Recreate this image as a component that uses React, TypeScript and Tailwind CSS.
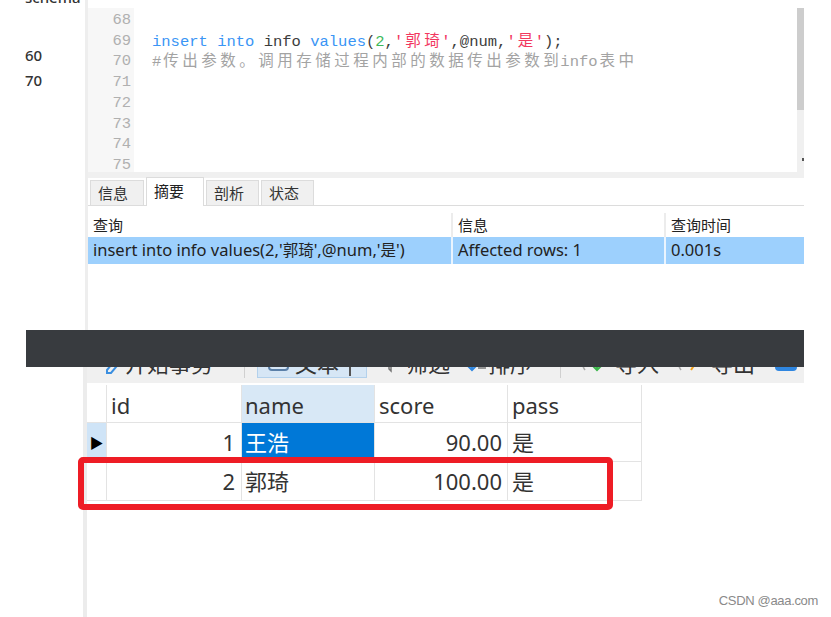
import React from "react";

const mono = { fontFamily: '"Liberation Mono", "Noto Sans CJK SC", monospace' };

// CJK runs in the editor are drawn wider than the mono cell
function Cjk({ children }: { children: React.ReactNode }) {
  return <span className="tracking-[3.5px] ml-[2px] -mr-[2px]">{children}</span>;
}

const lineNumbers = [68, 69, 70, 71, 72, 73, 74, 75];

function Editor() {
  return (
    <div className="flex h-[170px]">
      <div className="flex-1 flex flex-col">
        <div className="flex h-[164px] bg-white">
          <div
            className="w-[46px] bg-[#f7f7f7] pt-[2px] pr-[3px] text-right text-[15.5px] leading-[20.7px] text-[#b0b0b0]"
            style={mono}
          >
            {lineNumbers.map(n => (
              <div key={n}>{n}</div>
            ))}
          </div>
          <div className="flex-1 pl-[18px] pt-[3px] text-[15.5px] leading-[20.7px] whitespace-pre" style={mono}>
            <div>&nbsp;</div>
            <div className="text-[#3c3c3c]">
              <span className="text-[#3a95f5]">insert</span> <span className="text-[#3a95f5]">into</span> info{" "}
              <span className="text-[#3a95f5]">values</span>(<span className="text-[#3cb95a]">2</span>,
              <span className="text-[#f2385f]">'<Cjk>郭琦</Cjk>'</span>,@num,
              <span className="text-[#f2385f]">'<Cjk>是</Cjk>'</span>);
            </div>
            <div className="text-[#a3a3a3]">
              #<Cjk>传出参数。调用存储过程内部的数据传出参数到</Cjk>info<Cjk>表中</Cjk>
            </div>
          </div>
        </div>
        <div className="h-[6px] bg-[#f0f0f0]" />
      </div>
      {/* scrollbar */}
      <div className="w-[7px] flex flex-col">
        <div className="h-[102px] bg-[#cdcdcd]" />
        <div className="flex-1 bg-[#f0f0f0] flex flex-col items-end pt-[48px]">
          <div className="w-[2px] h-[3px] bg-[#555]" />
        </div>
      </div>
    </div>
  );
}

function Tabs() {
  const tabs = [
    { label: "信息", w: "w-[54px]", active: false },
    { label: "摘要", w: "w-[58px]", active: true },
    { label: "剖析", w: "w-[53px]", active: false },
    { label: "状态", w: "w-[53px]", active: false },
  ];
  return (
    <div className="flex items-end h-[28px] border-b border-[#dcdcdc] pl-[2px] gap-[2px]">
      {tabs.map(t =>
        t.active ? (
          <div
            key={t.label}
            className={`${t.w} h-[29px] -mb-px bg-white border-x border-t border-[#dcdcdc] pl-[7px] pt-[2px] text-[15px] text-[#222]`}
          >
            {t.label}
          </div>
        ) : (
          <div
            key={t.label}
            className={`${t.w} h-[25px] bg-[#f0f0f0] border-x border-t border-[#dcdcdc] pl-[7px] pt-[1px] text-[15px] text-[#333]`}
          >
            {t.label}
          </div>
        )
      )}
    </div>
  );
}

function Summary() {
  return (
    <div className="pt-[7px] text-[#222]">
      <div className="flex h-[24px] items-center text-[15px]">
        <div className="w-[365px] pl-[5px] h-full flex items-center border-r-2 border-[#ececec]">查询</div>
        <div className="w-[213px] pl-[5px] h-full flex items-center border-r-2 border-[#ececec]">信息</div>
        <div className="flex-1 pl-[5px] h-full flex items-center">查询时间</div>
      </div>
      <div className="flex h-[27px] items-center bg-[#9dd0fd] text-[16.5px]">
        <div className="w-[365px] pl-[5px] h-full flex items-center border-r-2 border-[#eaf4fe] whitespace-nowrap">
          insert into info values(2,'<span className="text-[15.5px]">郭琦</span>',@num,'<span className="text-[15.5px]">是</span>')
        </div>
        <div className="w-[213px] pl-[5px] h-full flex items-center border-r-2 border-[#eaf4fe]">Affected rows: 1</div>
        <div className="flex-1 pl-[5px] h-full flex items-center">0.001s</div>
      </div>
    </div>
  );
}

function Toolbar() {
  return (
    <div className="h-[16px] bg-[#f0f0f0] overflow-hidden">
      <div className="flex items-center h-[30px] -mt-[19px] text-[22px] text-[#333] whitespace-nowrap">
        <div className="flex items-center ml-[6px] w-[151px]">
          <svg width="30" height="22" viewBox="0 0 30 22" fill="none" className="mr-[2px]">
            <path d="M2 12h16" stroke="#9aa0a6" strokeWidth="2" />
            <path d="M14 18l10-12 4 3-10 12h-4z" stroke="#3b8fe0" strokeWidth="2" />
          </svg>
          开始事务
        </div>
        <div className="w-px h-[30px] bg-[#d0d0d0]" />
        <div className="ml-[12px] w-[110px] h-[30px] bg-[#d6e6f5] border border-[#b3d1ec] flex items-center pl-[9px]">
          <svg width="24" height="22" viewBox="0 0 24 22" fill="none" className="mr-[4px]">
            <rect x="2" y="3" width="19" height="15" rx="3" stroke="#5a7fa8" strokeWidth="2" />
          </svg>
          文本
          <div className="ml-[10px] w-[2px] h-[26px] bg-[#555]" />
        </div>
        <div className="flex items-center ml-[16px]">
          <svg width="14" height="22" viewBox="0 0 14 22" fill="none" className="mr-[9px]">
            <path d="M1 4h12l-5 7v8l-2-2v-6z" stroke="#777" strokeWidth="1.5" />
          </svg>
          筛选
        </div>
        <div className="flex items-center ml-[16px]">
          <svg width="22" height="22" viewBox="0 0 22 22" fill="none">
            <path d="M6 2v16M2 14l4 4 4-4" stroke="#2f86e0" strokeWidth="2" />
            <path d="M12 12h8M12 16h8" stroke="#777" strokeWidth="1.5" />
          </svg>
          排序
        </div>
        <div className="ml-[28px] w-px h-[30px] bg-[#d0d0d0]" />
        <div className="flex items-center ml-[20px]">
          <svg width="30" height="22" viewBox="0 0 30 22" fill="none" className="mr-[4px]">
            <path d="M4 6c-3 4-3 8 0 12" stroke="#aaa" strokeWidth="1.5" />
            <path d="M16 4v14M11 13l5 5 5-5" stroke="#3bb54a" strokeWidth="2" />
          </svg>
          导入
        </div>
        <div className="flex items-center ml-[18px]">
          <svg width="30" height="22" viewBox="0 0 30 22" fill="none" className="mr-[4px]">
            <path d="M4 6c-3 4-3 8 0 12" stroke="#aaa" strokeWidth="1.5" />
            <path d="M14 18l8-12" stroke="#f2a11c" strokeWidth="2" />
          </svg>
          导出
        </div>
        <div className="ml-[18px]">
          <svg width="26" height="22" viewBox="0 0 26 22" fill="none">
            <rect x="2" y="4" width="22" height="15" rx="4" fill="#2f86e0" />
            <path d="M7 10h12M7 14h12" stroke="#fff" strokeWidth="1.5" />
          </svg>
        </div>
      </div>
    </div>
  );
}

const rows = [
  { id: "1", name: "王浩", score: "90.00", pass: "是", current: true },
  { id: "2", name: "郭琦", score: "100.00", pass: "是", current: false },
];

function Grid() {
  const cell = "border-r border-b border-[#e3e3e3] flex items-center";
  return (
    <div className="mt-[2px] text-[22px] text-[#333]">
      <div className="flex h-[38px]">
        <div className={`${cell} w-[20px]`} />
        <div className={`${cell} w-[135px] pl-[4px] pt-[4px]`}>id</div>
        <div className={`${cell} w-[133px] pl-[3px] pt-[4px] bg-[#d8e8f6]`}>name</div>
        <div className={`${cell} w-[133px] pl-[4px] pt-[4px]`}>score</div>
        <div className={`${cell} w-[134px] pl-[4px] pt-[4px]`}>pass</div>
      </div>
      {rows.map(r => (
        <div key={r.id} className="flex h-[39px]">
          <div className={`${cell} w-[20px] justify-center ${r.current ? "bg-[#cfe4f7]" : ""}`}>
            {r.current && <span className="text-[14px] text-black">▶</span>}
          </div>
          <div className={`${cell} w-[135px] justify-end pr-[6px]`}>{r.id}</div>
          <div className={`${cell} w-[133px] pl-[3px] ${r.current ? "bg-[#0078d7] text-white" : ""}`}>{r.name}</div>
          <div className={`${cell} w-[133px] justify-end pr-[5px]`}>{r.score}</div>
          <div className={`${cell} w-[134px] pl-[4px]`}>{r.pass}</div>
        </div>
      ))}
    </div>
  );
}

export default function App() {
  return (
    <div
      className="relative w-[831px] h-[617px] overflow-hidden bg-white"
      style={{ fontFamily: '"Noto Sans", "Noto Sans CJK SC", sans-serif' }}
    >
      <div className="flex h-[330px]">
        {/* object list remnants */}
        <div className="w-[85px] pl-[25px] text-[15px] leading-[25px] text-[#333] font-medium overflow-hidden">
          <div className="-mt-[15px]">schema</div>
          <div className="mt-[33px]">60</div>
          <div>70</div>
        </div>
        <div className="w-[719px] border-l-[3px] border-[#eeeeee] flex flex-col pt-[8px]">
          <Editor />
          <Tabs />
          <Summary />
        </div>
      </div>

      <div className="ml-[26px] w-[778px] h-[37px] bg-[#383b3f]" />

      <div className="ml-[83px] w-[721px] h-[250px] border-l-[4px] border-[#ececec]">
        <Toolbar />
        <Grid />
      </div>

      {/* annotation */}
      <div className="absolute left-[78px] top-[457px] w-[535px] h-[53px] border-[6px] border-[#ee1c25] rounded-[5px]" />

      <div
        className="absolute right-[13px] bottom-[7px] text-[13px] text-[#8a8a8a] tracking-tight"
        style={{ fontFamily: '"Liberation Sans", sans-serif' }}
      >
        CSDN @aaa.com
      </div>
    </div>
  );
}
